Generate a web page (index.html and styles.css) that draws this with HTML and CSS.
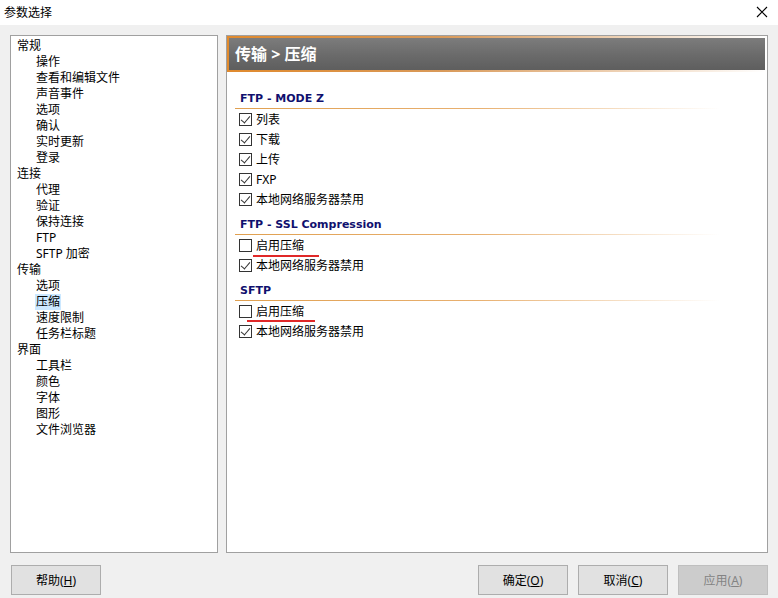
FILE: index.html
```html
<!DOCTYPE html>
<html lang="zh-CN">
<head>
    <meta charset="UTF-8">
    <title>参数选择</title>
    <link rel="stylesheet" href="styles.css">
</head>
<body>
    <div class="titlebar">
        <span class="title">参数选择</span>
        <svg class="close" width="12" height="12" viewBox="0 0 12 12">
            <path d="M1 1 L11 11 M11 1 L1 11" stroke="#000" stroke-width="1.1" fill="none"/>
        </svg>
    </div>

    <div class="main">
        <ul class="tree">
            <li class="group">常规</li>
            <li class="leaf">操作</li>
            <li class="leaf">查看和编辑文件</li>
            <li class="leaf">声音事件</li>
            <li class="leaf">选项</li>
            <li class="leaf">确认</li>
            <li class="leaf">实时更新</li>
            <li class="leaf">登录</li>
            <li class="group">连接</li>
            <li class="leaf">代理</li>
            <li class="leaf">验证</li>
            <li class="leaf">保持连接</li>
            <li class="leaf">FTP</li>
            <li class="leaf">SFTP 加密</li>
            <li class="group">传输</li>
            <li class="leaf">选项</li>
            <li class="leaf"><span class="selected">压缩</span></li>
            <li class="leaf">速度限制</li>
            <li class="leaf">任务栏标题</li>
            <li class="group">界面</li>
            <li class="leaf">工具栏</li>
            <li class="leaf">颜色</li>
            <li class="leaf">字体</li>
            <li class="leaf">图形</li>
            <li class="leaf">文件浏览器</li>
        </ul>

        <div class="content">
            <div class="page-header">传输 &gt; 压缩</div>

            <div class="section first">
                <div class="section-title">FTP - MODE Z</div>
                <label class="check"><span class="box checked"></span>列表</label>
                <label class="check"><span class="box checked"></span>下载</label>
                <label class="check"><span class="box checked"></span>上传</label>
                <label class="check"><span class="box checked"></span>FXP</label>
                <label class="check"><span class="box checked"></span>本地网络服务器禁用</label>
            </div>

            <div class="section">
                <div class="section-title">FTP - SSL Compression</div>
                <label class="check"><span class="box"></span><span class="marked mark-a">启用压缩</span></label>
                <label class="check"><span class="box checked"></span>本地网络服务器禁用</label>
            </div>

            <div class="section">
                <div class="section-title">SFTP</div>
                <label class="check"><span class="box"></span><span class="marked mark-b">启用压缩</span></label>
                <label class="check"><span class="box checked"></span>本地网络服务器禁用</label>
            </div>
        </div>
    </div>

    <div class="footer">
        <button class="btn">帮助(<u>H</u>)</button>
        <div class="spacer"></div>
        <button class="btn">确定(<u>O</u>)</button>
        <button class="btn">取消(<u>C</u>)</button>
        <button class="btn" disabled>应用(<u>A</u>)</button>
    </div>
</body>
</html>
```

FILE: styles.css
```css
* {
    margin: 0;
    padding: 0;
    box-sizing: border-box;
}

body {
    width: 778px;
    height: 598px;
    background: #f0f0f0;
    font-family: "Noto Sans", "Noto Sans CJK SC", sans-serif;
    font-size: 12px;
    color: #000;
    overflow: hidden;
}

.titlebar {
    height: 25px;
    background: #fff;
    display: flex;
    align-items: center;
    justify-content: space-between;
    padding: 0 10px 1px 4px;
}

.title {
    font-size: 12px;
}

.main {
    display: flex;
    gap: 8px;
    padding: 10px 10px 0 10px;
    height: 528px;
}

.tree {
    list-style: none;
    width: 208px;
    background: #fff;
    border: 1px solid #a0a0a0;
    padding: 2px 0 0 6px;
}

.tree li {
    height: 16px;
    line-height: 16px;
    white-space: nowrap;
}

.tree .leaf {
    padding-left: 19px;
}

.tree .selected {
    display: inline-block;
    background: #cce8ff;
    padding: 0 1px;
    margin-left: -1px;
}

.content {
    flex: 1;
    background: #fff;
    border: 1px solid #a0a0a0;
}

.page-header {
    height: 36px;
    border: 2px solid;
    border-image: linear-gradient(to right, #e08a2e 0%, #d99a5a 40%, #ffffff 100%) 1;
    background: linear-gradient(to bottom, #7c7c7c 0%, #6a6a6a 55%, #5e5e5e 100%);
    color: #fff;
    font-size: 16px;
    font-weight: bold;
    line-height: 32px;
    padding-left: 6px;
}

.section {
    margin-left: 8px;
    display: flex;
    flex-direction: column;
}

.section.first {
    margin-top: 11px;
}

.section-title {
    height: 26px;
    padding: 7px 0 0 5px;
    line-height: 17px;
    font-family: "DejaVu Sans", sans-serif;
    font-size: 11px;
    font-weight: bold;
    color: #10106e;
    position: relative;
}

.section-title::after {
    content: "";
    position: absolute;
    left: 0;
    bottom: 0;
    width: 485px;
    height: 1px;
    background: linear-gradient(to right, #e0a050 0%, #e8b070 50%, rgba(240, 200, 150, 0) 100%);
}

.check {
    height: 20px;
    display: flex;
    align-items: center;
    padding-left: 4px;
}

.box {
    width: 13px;
    height: 13px;
    border: 1px solid #333;
    background: #fff;
    margin-right: 4px;
    position: relative;
}

.box.checked::after {
    content: "";
    position: absolute;
    left: 3px;
    top: 0px;
    width: 4px;
    height: 8px;
    border: solid #333;
    border-width: 0 1.5px 1.5px 0;
    transform: rotate(40deg);
}

/* red annotation under the option */
.marked {
    position: relative;
}

.marked::after {
    content: "";
    position: absolute;
    height: 2px;
    background: #e02828;
}

.mark-a::after {
    left: -3px;
    width: 66px;
    top: 19px;
}

.mark-b::after {
    left: -9px;
    width: 68px;
    top: 18px;
}

.footer {
    display: flex;
    gap: 10px;
    padding: 12px 10px 0 11px;
}

.spacer {
    flex: 1;
}

.btn {
    width: 90px;
    height: 30px;
    background: #e1e1e1;
    border: 1px solid #adadad;
    font-family: "Noto Sans", "Noto Sans CJK SC", sans-serif;
    font-size: 12px;
    color: #000;
}

.btn:disabled {
    background: #cccccc;
    border-color: #bfbfbf;
    color: #838383;
}
```
